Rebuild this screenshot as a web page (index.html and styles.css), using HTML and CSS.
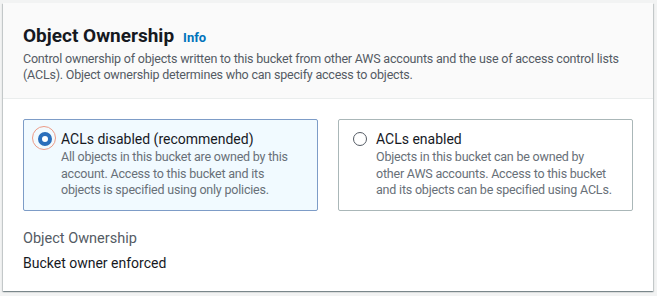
FILE: index.html
```html
<!DOCTYPE html>
<html lang="en">
<head>
    <meta charset="UTF-8">
    <title>Object Ownership</title>
    <link rel="stylesheet" href="styles.css">
</head>
<body>
    <div class="container">
        <div class="container-header">
            <h2 class="title">Object Ownership <a class="info" href="#">Info</a></h2>
            <p class="description">Control ownership of objects written to this bucket from other AWS accounts and the use of access control lists (ACLs). Object ownership determines who can specify access to objects.</p>
        </div>
        <div class="container-body">
            <div class="tiles">
                <label class="tile selected">
                    <span class="radio checked"><span class="focus-ring"></span></span>
                    <span class="tile-text">
                        <span class="tile-label">ACLs disabled (recommended)</span>
                        <span class="tile-desc">All objects in this bucket are owned by this account. Access to this bucket and its objects is specified using only policies.</span>
                    </span>
                </label>
                <label class="tile">
                    <span class="radio"></span>
                    <span class="tile-text">
                        <span class="tile-label">ACLs enabled</span>
                        <span class="tile-desc">Objects in this bucket can be owned by other AWS accounts. Access to this bucket and its objects can be specified using ACLs.</span>
                    </span>
                </label>
            </div>
            <div class="key-value">
                <div class="key">Object Ownership</div>
                <div class="value">Bucket owner enforced</div>
            </div>
        </div>
    </div>
</body>
</html>
```

FILE: styles.css
```css
body {
    font-family: Roboto, "Noto Sans", sans-serif;
    background-color: #f2f3f3;
    margin: 0;
    padding: 3px 4px 4px 3px;
    color: #16191f;
}

.container {
    background-color: #ffffff;
    box-shadow: 0 1px 1px 0 rgba(0, 28, 36, 0.3), 1px 1px 1px 0 rgba(0, 28, 36, 0.15), -1px 1px 1px 0 rgba(0, 28, 36, 0.15);
}

.container-header {
    background-color: #fafafa;
    border-bottom: 1px solid #eaeded;
    padding: 21px 20px 15px 20px;
}

.title {
    display: flex;
    align-items: baseline;
    gap: 9px;
    margin: 0;
    font-size: 19px;
    font-weight: 700;
    line-height: 24px;
}

.info {
    font-size: 13px;
    font-weight: 700;
    color: #0073bb;
    text-decoration: none;
}

.description {
    margin: 1px 0 0 0;
    font-size: 12.5px;
    letter-spacing: -0.2px;
    line-height: 16px;
    color: #545b64;
}

.container-body {
    padding: 20px 20px 18px 20px;
}

.tiles {
    display: grid;
    grid-template-columns: 1fr 1fr;
    gap: 20px;
}

.tile {
    display: flex;
    gap: 9px;
    border: 1px solid #aab7b8;
    border-radius: 2px;
    padding: 9px 20px 11px 14px;
}

.tile.selected {
    background-color: #f1faff;
    border-color: #7d9cc7;
}

.radio {
    position: relative;
    flex: none;
    width: 12px;
    height: 12px;
    margin-top: 3px;
    border: 1px solid #545b64;
    border-radius: 50%;
    background-color: #ffffff;
}

.radio.checked {
    width: 6px;
    height: 6px;
    border: 4px solid #2a6ebb;
}

.focus-ring {
    position: absolute;
    left: -10px;
    top: -10px;
    width: 22px;
    height: 22px;
    border: 1.5px solid #ec9a86;
    border-radius: 50%;
}

.tile-text {
    display: flex;
    flex-direction: column;
}

.tile-label {
    font-size: 14px;
    line-height: 20px;
}

.tile-desc {
    font-size: 12.5px;
    letter-spacing: -0.2px;
    line-height: 16.5px;
    color: #687078;
}

.key-value {
    margin-top: 18px;
}

.key {
    font-size: 14.5px;
    line-height: 20px;
    color: #545b64;
}

.value {
    margin-top: 4px;
    font-size: 14px;
    line-height: 20px;
}
```
